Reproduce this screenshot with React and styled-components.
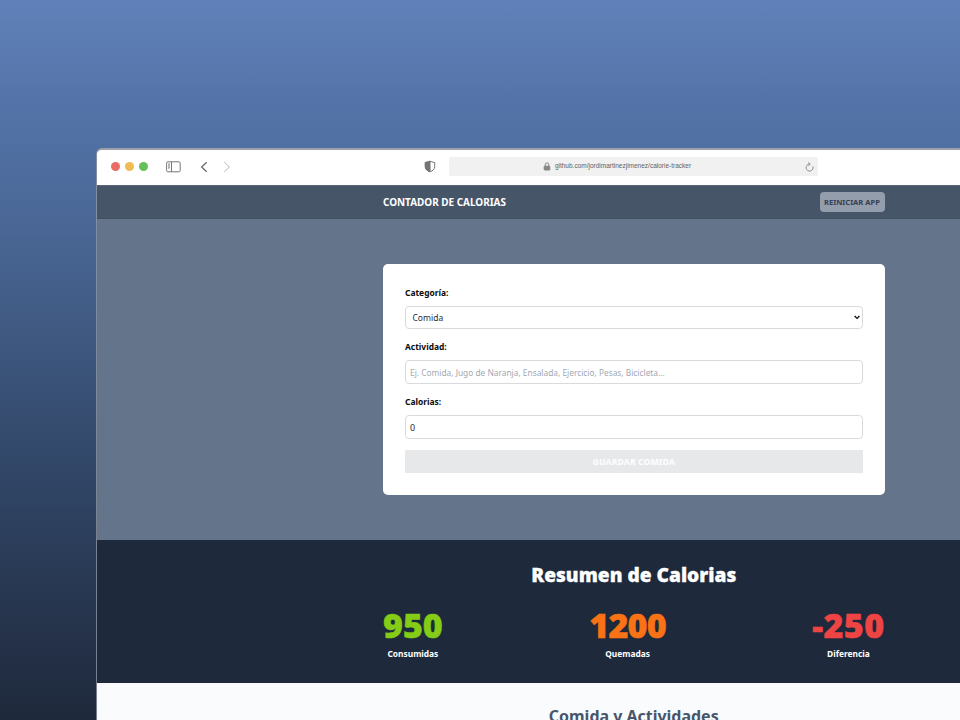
import React from 'react';
import styled, { createGlobalStyle } from 'styled-components';

const Global = createGlobalStyle`
  *, *::before, *::after { box-sizing: border-box; }
  html, body { margin: 0; padding: 0; overflow: hidden; }
  body { font-family: 'Noto Sans', 'Open Sans', sans-serif; }
  h1, h2, p { margin: 0; }
`;

const Desktop = styled.main`
  width: 960px;
  height: 720px;
  overflow: hidden;
  padding: 148px 0 0 96px;
  background: linear-gradient(180deg, #6081b9 0%, #5474a9 14%, #496694 32%, #304565 67%, #232f45 92%, #1e293b 100%);
`;

const BrowserWindow = styled.section`
  width: 1075px;
  height: 640px;
  border: 1px solid #a2a5ad;
  border-top: 2px solid #9c9fac;
  border-radius: 6px 6px 0 0;
  overflow: hidden;
  background: #f9fbfd;
  border-left-color: rgba(150, 155, 165, 0.75);
  background-clip: padding-box;
`;

const TitleBar = styled.header`
  display: flex;
  align-items: center;
  height: 35px;
  padding: 0 0 2px 14px;
  background: #fff;
`;

const Lights = styled.div`
  display: flex;
  gap: 5.2px;
  margin-right: 18px;
`;

const Light = styled.span`
  width: 9px;
  height: 9px;
  border-radius: 50%;
  background: ${({ $color }) => $color};
`;

const Icon = styled.svg`
  display: block;
  flex: none;
  fill: none;
  stroke: ${({ $stroke }) => $stroke || '#777'};
  stroke-width: ${({ $weight }) => $weight || 1};
  margin-right: ${({ $after }) => $after || 0}px;
`;

const AddressBar = styled.div`
  display: flex;
  align-items: center;
  width: 369px;
  height: 19px;
  padding: 0 4px 0 94px;
  border-radius: 2px;
  background: #f1f1f1;
`;

const Address = styled.span`
  flex: 1;
  padding-bottom: 2px;
  color: #626262;
  font: 6.5px/10px 'Liberation Sans', sans-serif;
  white-space: nowrap;
`;

const NavBar = styled.nav`
  height: 34px;
  background: #475569;
  border-top: 1px solid #5a6473;
  border-bottom: 1px solid #425065;
`;

const Container = styled.div`
  width: 501.5px;
  margin-left: 286px;
`;

const NavRow = styled(Container)`
  display: flex;
  align-items: center;
  justify-content: space-between;
  height: 32px;
`;

const AppTitle = styled.h1`
  color: #fff;
  font-size: 9.95px;
  line-height: 14px;
  font-weight: 700;
`;

const ResetButton = styled.button`
  width: 65px;
  height: 20px;
  padding: 0;
  border: 0;
  border-radius: 4px;
  background: #949dac;
  color: #354052;
  font: 700 7.6px/20px 'Noto Sans', sans-serif;
  white-space: nowrap;
`;

const FormSection = styled.section`
  height: 321px;
  padding-top: 45px;
  background: #64748b;
`;

const Card = styled(Container)`
  display: flex;
  flex-direction: column;
  gap: 11px;
  height: 231px;
  padding: 21px 22px 22px;
  border-radius: 5px;
  background: #fff;
`;

const Field = styled.label`
  display: grid;
  gap: 6px;
  margin-bottom: ${({ $last }) => ($last ? 0 : -1)}px;
  color: #0b0b0b;
  font-size: 8.43px;
  line-height: 15px;
  font-weight: 700;
`;

const controlLook = `
  width: 100%;
  border: 1px solid #d8dade;
  border-radius: 4px;
  outline: 0;
  background: #fff;
  color: #262b33;
`;

const SelectBox = styled.span`
  ${controlLook}
  display: flex;
  align-items: center;
  justify-content: space-between;
  height: 23px;
  padding: 0 2px 0 6.5px;
  font-weight: 400;
  font-size: 8.5px;
`;

const Input = styled.input`
  ${controlLook}
  height: 24px;
  padding: 1px 4px 0;
  font: 400 ${({ $size }) => $size || 8.35}px/15px 'Noto Sans', sans-serif;
  &::placeholder { color: #a3a8b1; opacity: 1; }
`;

const SaveButton = styled.button`
  height: 23px;
  padding: 1px 0 0;
  border: 0;
  background: #e7e8ea;
  color: #fcfdfd;
  font: 800 8.75px/22px 'Noto Sans', sans-serif;
`;

const Summary = styled.section`
  height: 143px;
  padding-top: 22px;
  background: #1e293b;
  color: #fff;
`;

const SummaryTitle = styled.h2`
  font-size: 19.15px;
  line-height: 26px;
  font-weight: 900;
  text-align: center;
  -webkit-text-stroke: 0.3px #fff;
`;

const Stats = styled.div`
  display: flex;
  justify-content: space-between;
  margin-top: 18px;
`;

const Stat = styled.div`
  display: flex;
  flex-direction: column;
  align-items: center;
  font-size: 8.4px;
  line-height: 13px;
  font-weight: 700;
`;

const StatValue = styled.span`
  margin-bottom: 3px;
  color: ${({ $color }) => $color};
  -webkit-text-stroke: 0.5px ${({ $color }) => $color};
  font-size: 34px;
  line-height: 38px;
  font-weight: 900;
  letter-spacing: ${({ $track }) => $track || 0}px;
`;

const Activities = styled.section`
  height: 100px;
  padding-top: 20px;
  background: #f9fbfd;
`;

const ActivitiesTitle = styled.h2`
  color: #475569;
  font-size: 15.98px;
  line-height: 26px;
  font-weight: 700;
  text-align: center;
`;

const STATS = [
  { value: '950', label: 'Consumidas', color: '#84cc16' },
  { value: '1200', label: 'Quemadas', color: '#f97316', track: -0.8 },
  { value: '-250', label: 'Diferencia', color: '#ef4444', track: 0.4 },
];

function BrowserChrome() {
  return (
    <TitleBar>
      <Lights>
        <Light $color="#eb6b65" />
        <Light $color="#f0bb55" />
        <Light $color="#64c058" />
      </Lights>
      <Icon width="15" height="12" viewBox="0 0 15 12" $after={18.5}>
        <rect x="0.6" y="0.8" width="13.6" height="10" rx="1.3" />
        <path d="M5.5 0.8v10M2 3.1h2M2 5h2M2 6.9h2" />
      </Icon>
      <Icon width="8" height="12" viewBox="0 0 8 12" $after={15.5} $weight={1.2} $stroke="#656565">
        <path d="M6.7 1.2 1.6 6l5.1 4.8" />
      </Icon>
      <Icon width="8" height="12" viewBox="0 0 8 12" $after={193} $stroke="#b5b5b5">
        <path d="M1.3 1.2 6.4 6l-5.1 4.8" />
      </Icon>
      <Icon width="12" height="13" viewBox="0 0 12 13" $after={13} $stroke="#747474">
        <path d="M6 1.2C4.7 1.8 3.2 2.2 1.3 2.5v4.2c0 2.6 1.9 4.1 4.7 5.1 2.8-1 4.7-2.5 4.7-5.1V2.5C8.8 2.2 7.3 1.8 6 1.2Z" />
        <path d="M6 1.2C4.7 1.8 3.2 2.2 1.3 2.5v4.2c0 2.6 1.9 4.1 4.7 5.1Z" fill="#747474" />
      </Icon>
      <AddressBar>
        <Icon width="8" height="9" viewBox="0 0 8 9" $after={3.5} $stroke="#858585">
          <path d="M2.2 4V2.7a1.8 1.8 0 0 1 3.6 0V4" />
          <rect x="1.2" y="4.2" width="5.6" height="3.8" rx=".5" fill="#858585" />
        </Icon>
        <Address>github.com/jordimartinezjimenez/calorie-tracker</Address>
        <Icon width="9" height="10" viewBox="0 0 9 10" $stroke="#777" $weight={0.8}>
          <path d="M7.8 4.2A3.5 3.5 0 1 1 4.5 2.1M3.2.5l2 1.6-1.8 1.7" />
        </Icon>
      </AddressBar>
    </TitleBar>
  );
}

function CalorieForm() {
  return (
    <FormSection>
      <Card>
        <Field as="div">
          Categoría:
          <SelectBox>
            Comida
            <Icon width="6" height="5" viewBox="0 0 6 5" $stroke="#111" $weight={1.4}>
              <path d="m.6 1.1 2.4 2.3 2.4-2.3" />
            </Icon>
          </SelectBox>
        </Field>
        <Field>
          Actividad:
          <Input placeholder="Ej. Comida, Jugo de Naranja, Ensalada, Ejercicio, Pesas, Bicicleta..." />
        </Field>
        <Field $last>
          Calorias:
          <Input defaultValue="0" $size={9} />
        </Field>
        <SaveButton>GUARDAR COMIDA</SaveButton>
      </Card>
    </FormSection>
  );
}

export default function App() {
  return (
    <>
      <Global />
      <Desktop>
        <BrowserWindow>
          <BrowserChrome />
          <NavBar>
            <NavRow>
              <AppTitle>CONTADOR DE CALORIAS</AppTitle>
              <ResetButton>REINICIAR APP</ResetButton>
            </NavRow>
          </NavBar>
          <CalorieForm />
          <Summary>
            <Container>
              <SummaryTitle>Resumen de Calorias</SummaryTitle>
              <Stats>
                {STATS.map(({ value, label, color, track }) => (
                  <Stat key={label}>
                    <StatValue $color={color} $track={track}>{value}</StatValue>
                    {label}
                  </Stat>
                ))}
              </Stats>
            </Container>
          </Summary>
          <Activities>
            <Container>
              <ActivitiesTitle>Comida y Actividades</ActivitiesTitle>
            </Container>
          </Activities>
        </BrowserWindow>
      </Desktop>
    </>
  );
}
